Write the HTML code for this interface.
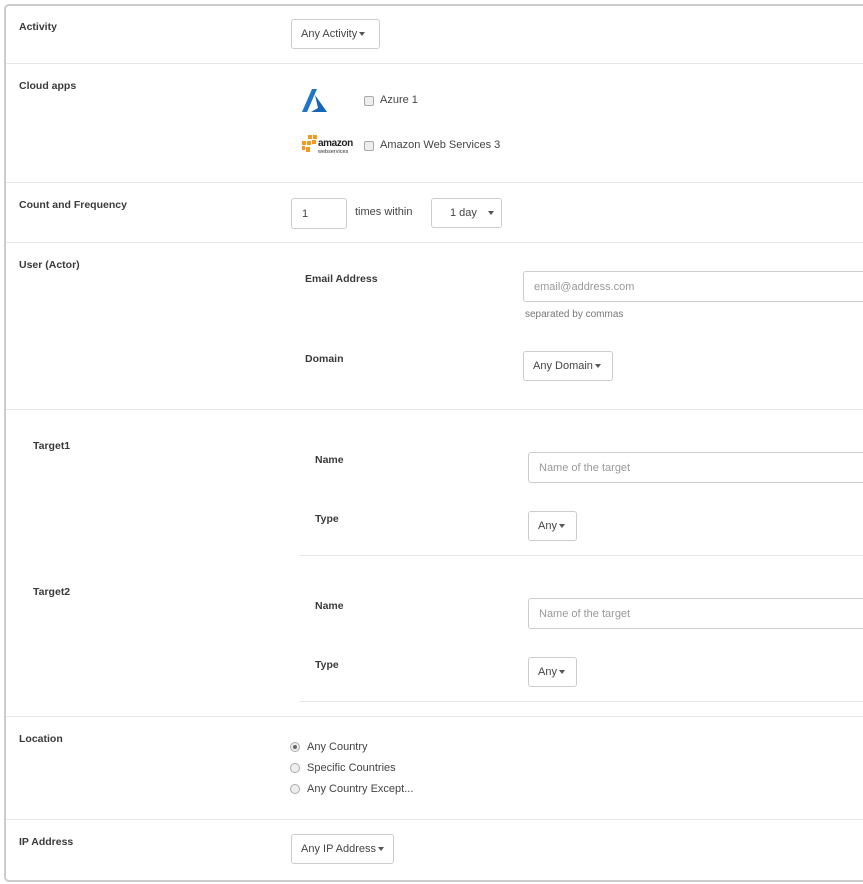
<!DOCTYPE html>
<html><head><style>
body{margin:0;width:863px;height:884px;background:#fff;font-family:"Liberation Sans",sans-serif;font-size:11px;color:#444;position:relative;overflow:hidden}
.frame{position:absolute;left:4px;top:4px;width:880px;height:874px;border:2px solid #ccc;border-radius:5px}
.a{position:absolute;white-space:nowrap}
.l{font-weight:bold;color:#3a3a3a;font-size:10.5px}
.hr{position:absolute;height:1px;background:#e6e6e6;right:0}
.btn{position:absolute;border:1px solid #ccc;border-radius:3px;box-sizing:border-box;height:30px;line-height:28px;padding:0 9px;color:#444;background:#fff;white-space:nowrap}
.car{display:inline-block;width:0;height:0;border-left:3.5px solid transparent;border-right:3.5px solid transparent;border-top:4px solid #555;vertical-align:middle;margin-left:2px}
.inp{position:absolute;border:1px solid #ccc;border-radius:3px;box-sizing:border-box;height:31px;line-height:30px;padding:0 10px;color:#999;white-space:nowrap}
.cb{position:absolute;width:8px;height:8px;border:1px solid #aaa;border-radius:2px;background:#eee}
.rd{position:absolute;width:8px;height:8px;border:1px solid #aaa;border-radius:50%;background:#eee}
</style></head><body>
<div class="frame"></div>
<div class="hr" style="left:6px;top:63px"></div>
<div class="hr" style="left:6px;top:182px"></div>
<div class="hr" style="left:6px;top:242px"></div>
<div class="hr" style="left:6px;top:409px"></div>
<div class="hr" style="left:300px;top:555px"></div>
<div class="hr" style="left:300px;top:701px"></div>
<div class="hr" style="left:6px;top:716px"></div>
<div class="hr" style="left:6px;top:819px"></div>

<div class="a l" style="left:19px;top:21px">Activity</div>
<div class="btn" style="left:291px;top:19px;width:89px">Any Activity<span class="car"></span></div>

<div class="a l" style="left:19px;top:80px">Cloud apps</div>
<svg class="a" style="left:302px;top:89px" width="26" height="24" viewBox="0 0 26 24"><path d="M10 0 L15 0 L5 23 L0 23 Z" fill="#1f75c8"/><path d="M13 6 L25 23 L9 23 L16 19 Z" fill="#1565b8"/></svg>
<div class="cb" style="left:364px;top:96px"></div>
<div class="a" style="left:380px;top:94px">Azure 1</div>
<svg class="a" style="left:302px;top:135px" width="17" height="20" viewBox="0 0 17 20"><g fill="#f7981d"><rect x="6" y="0" width="4" height="4"/><rect x="11" y="0" width="4" height="4"/><rect x="0" y="6" width="4" height="4"/><rect x="5" y="6" width="4" height="4"/><rect x="10" y="5" width="4" height="4"/><rect x="4" y="12" width="4" height="5"/><rect x="0" y="11" width="3" height="4"/></g></svg>
<div class="a" style="left:318px;top:138px;font-weight:bold;font-size:10px;color:#222;letter-spacing:-0.4px">amazon</div>
<div class="a" style="left:318px;top:149px;font-size:5.5px;color:#333">webservices</div>
<div class="cb" style="left:364px;top:141px"></div>
<div class="a" style="left:380px;top:139px">Amazon Web Services 3</div>

<div class="a l" style="left:19px;top:199px">Count and Frequency</div>
<div class="inp" style="left:291px;top:198px;width:56px;color:#444">1</div>
<div class="a" style="left:355px;top:206px">times within</div>
<div class="btn" style="left:431px;top:198px;width:71px;padding-left:18px">1 day <span class="car" style="margin-left:8px"></span></div>

<div class="a l" style="left:19px;top:259px">User (Actor)</div>
<div class="a l" style="left:305px;top:273px">Email Address</div>
<div class="inp" style="left:523px;top:271px;width:360px">email@address.com</div>
<div class="a" style="left:525px;top:309px;font-size:10px;color:#777">separated by commas</div>
<div class="a l" style="left:305px;top:353px">Domain</div>
<div class="btn" style="left:523px;top:351px;width:90px">Any Domain<span class="car"></span></div>

<div class="a l" style="left:33px;top:440px">Target1</div>
<div class="a l" style="left:315px;top:454px">Name</div>
<div class="inp" style="left:528px;top:452px;width:360px">Name of the target</div>
<div class="a l" style="left:315px;top:513px">Type</div>
<div class="btn" style="left:528px;top:511px;width:49px">Any<span class="car"></span></div>

<div class="a l" style="left:33px;top:586px">Target2</div>
<div class="a l" style="left:315px;top:600px">Name</div>
<div class="inp" style="left:528px;top:598px;width:360px">Name of the target</div>
<div class="a l" style="left:315px;top:659px">Type</div>
<div class="btn" style="left:528px;top:657px;width:49px">Any<span class="car"></span></div>

<div class="a l" style="left:19px;top:733px">Location</div>
<div class="rd" style="left:290px;top:742px"><div style="position:absolute;left:2px;top:2px;width:4px;height:4px;border-radius:50%;background:#666"></div></div>
<div class="a" style="left:307px;top:741px">Any Country</div>
<div class="rd" style="left:290px;top:763px"></div>
<div class="a" style="left:307px;top:762px">Specific Countries</div>
<div class="rd" style="left:290px;top:784px"></div>
<div class="a" style="left:307px;top:783px">Any Country Except...</div>

<div class="a l" style="left:19px;top:836px">IP Address</div>
<div class="btn" style="left:291px;top:834px;width:103px">Any IP Address<span class="car"></span></div>
</body></html>
